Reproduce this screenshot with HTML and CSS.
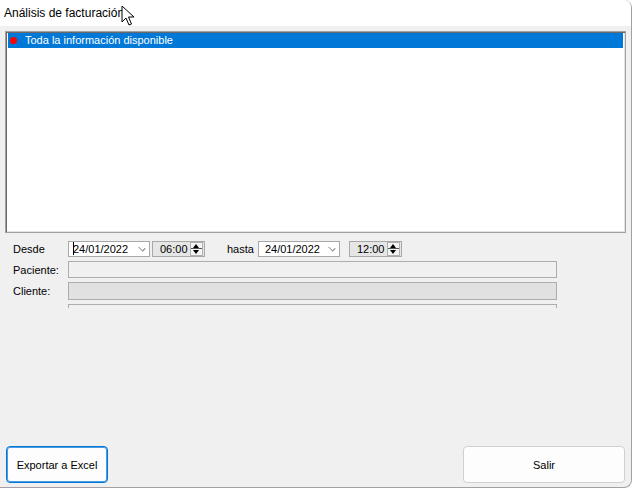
FILE: index.html
```html
<!DOCTYPE html>
<html lang="es">
<head>
  <meta charset="UTF-8" />
  <title>Análisis de facturación</title>
  <link rel="stylesheet" href="styles.css">
</head>
<body>

  <div class="window">
    <div class="titlebar">Análisis de facturación</div>

    <div class="client">
      <div class="listbox">
        <div class="item selected"><span class="dot"></span>Toda la información disponible</div>
      </div>

      <div class="filters">
        <div class="row">
          <span class="label">Desde</span>
          <div class="date first"><span class="caret"></span>24/01/2022<span class="chevron"></span></div>
          <div class="time">06:00<span class="spin"><i class="up"></i><i class="down"></i></span></div>
          <span class="label hasta">hasta</span>
          <div class="date">24/01/2022<span class="chevron"></span></div>
          <div class="time far">12:00<span class="spin"><i class="up"></i><i class="down"></i></span></div>
        </div>
        <div class="row field-row">
          <span class="label">Paciente:</span>
          <div class="field"></div>
        </div>
        <div class="row field-row">
          <span class="label">Cliente:</span>
          <div class="field disabled"></div>
        </div>
        <div class="row cut-row">
          <div class="field cut"></div>
        </div>
      </div>

      <div class="buttons">
        <button type="button" class="btn default">Exportar a Excel</button>
        <button type="button" class="btn wide">Salir</button>
      </div>
    </div>

    <svg class="cursor" width="14" height="22" viewBox="0 0 14 22">
      <path d="M1 1 L1 17 L5 13 L8 20 L10.5 19 L7.5 12 L13 12 Z" fill="#fff" stroke="#000" stroke-width="1" stroke-linejoin="round"/>
    </svg>
  </div>

</body>
</html>
```

FILE: styles.css
```css
body {
  margin: 0;
  background: #ffffff;
  font-family: "Liberation Sans", Arial, sans-serif;
  font-size: 11px;
  color: #000;
}

.window {
  position: relative;
  width: 631px;
  height: 487px;
  display: flex;
  flex-direction: column;
  border-right: 1px solid #a69ea6;
  border-bottom: 1px solid #a69ea6;
  border-radius: 0 8px 8px 0;
  overflow: hidden;
  background: #f0f0f0;
}

.titlebar {
  height: 26px;
  line-height: 26px;
  padding-left: 4px;
  background: #ffffff;
  font-size: 12px;
}

.client {
  flex: 1;
  display: flex;
  flex-direction: column;
  padding: 5px 5px 4px 5px;
}

.listbox {
  height: 199px;
  background: #fff;
  border: 1px solid #a0a0a0;
  box-shadow: inset 1px 1px 0 #696969, inset -1px -1px 0 #e3e3e3;
  padding: 1px 2px 0 2px;
}

.item {
  height: 15px;
  line-height: 15px;
  padding-left: 17px;
  position: relative;
}

.item.selected {
  background: #0078d7;
  color: #fff;
}

.dot {
  position: absolute;
  left: 2px;
  top: 4px;
  width: 7px;
  height: 7px;
  border-radius: 50%;
  background: #ff0000;
}

.filters {
  padding-left: 8px;
  margin-top: 8px;
}

.row {
  display: flex;
  align-items: center;
}

.label {
  width: 55px;
}

.label.hasta {
  width: auto;
  margin: 0 4px 0 22px;
}

.date {
  position: relative;
  width: 74px;
  height: 14px;
  line-height: 14px;
  padding-left: 6px;
  background: #fff;
  border: 1px solid #a8a8a8;
}

.date.first {
  padding-left: 4px;
  width: 76px;
}

.caret {
  display: inline-block;
  width: 1px;
  height: 13px;
  background: #000;
  vertical-align: top;
  margin-right: -1px;
}

.chevron {
  position: absolute;
  right: 4px;
  top: 3px;
  width: 5px;
  height: 5px;
  border-right: 1px solid #777;
  border-bottom: 1px solid #777;
  transform: rotate(45deg) scaleY(0.7);
}

.time {
  display: flex;
  align-items: center;
  width: 44px;
  height: 14px;
  line-height: 14px;
  margin-left: 2px;
  padding-left: 7px;
  background: #e6e6e6;
  border: 1px solid #a8a8a8;
}

.time.far {
  margin-left: 9px;
}

.spin {
  margin-left: auto;
  margin-right: 1px;
  width: 11px;
  height: 12px;
  border: 1px solid #b0b0b0;
  background: #f4f4f4;
  position: relative;
}

.spin .up,
.spin .down {
  position: absolute;
  left: 2px;
  width: 0;
  height: 0;
  border-left: 3.5px solid transparent;
  border-right: 3.5px solid transparent;
}

.spin .up {
  top: 1px;
  border-bottom: 4px solid #000;
}

.spin .down {
  bottom: 1px;
  border-top: 4px solid #000;
}

.spin::after {
  content: "";
  position: absolute;
  left: 0;
  right: 0;
  top: 5px;
  height: 1px;
  background: #555;
}

.field-row {
  margin-top: 4px;
}

.field {
  width: 487px;
  height: 15px;
  border: 1px solid #adadad;
  background: #f0f0f0;
}

.field.disabled {
  height: 16px;
  background: #e1e1e1;
}

.cut-row {
  margin-top: 4px;
  padding-left: 55px;
  height: 4px;
  overflow: hidden;
  align-items: flex-start;
}

.field.cut {
  height: 20px;
  border-bottom: none;
}

.buttons {
  margin-top: auto;
  display: flex;
  justify-content: space-between;
  padding-left: 1px;
  padding-right: 1px;
}

.btn {
  height: 37px;
  font-family: "Liberation Sans", Arial, sans-serif;
  font-size: 11px;
  color: #000;
  border-radius: 4px;
  background: #fdfdfd;
  border: 1px solid #d0d0d0;
  padding: 0 6px;
  white-space: nowrap;
}

.btn.default {
  width: 102px;
  border: 1px solid #0078d7;
  box-shadow: inset 0 0 0 1px #4a9de2;
}

.btn.wide {
  width: 162px;
}

.cursor {
  position: absolute;
  left: 121px;
  top: 5px;
}
```
